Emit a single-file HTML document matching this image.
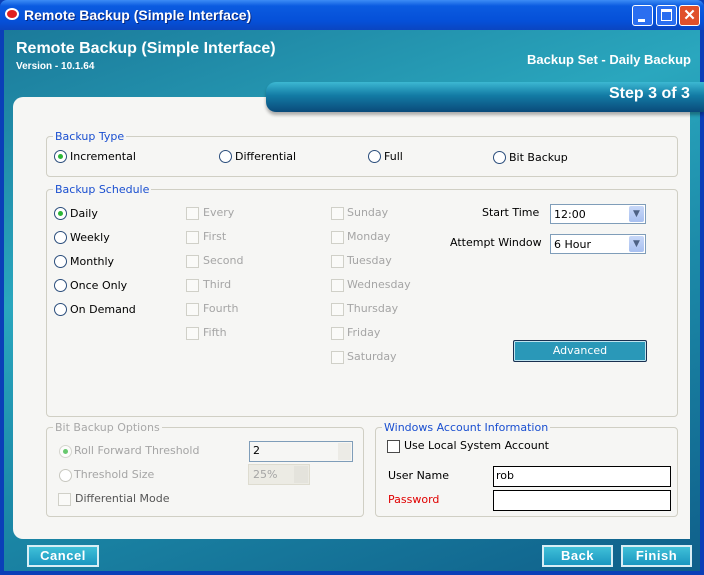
<!DOCTYPE html><html><head><style>
*{margin:0;padding:0;box-sizing:border-box}
body{width:704px;height:575px;position:relative;overflow:hidden;font-family:"DejaVu Sans","Liberation Sans",sans-serif;font-size:11px;background:#0a3fb8}
.a{position:absolute;white-space:nowrap}
.title{left:0;top:0;width:704px;height:30px;background:linear-gradient(#3d8cf5,#0b5be0 20%,#0550d8 70%,#0a45c0);border-radius:7px 7px 0 0}
.main{left:4px;top:30px;width:696px;height:541px;background:linear-gradient(160deg,#1b7a9a 0%,#2aa7be 35%,#1c8aa8 60%,#0f5f8a 100%)}
.panel{left:13px;top:97px;width:677px;height:442px;background:#f6f6f4;border-radius:10px 0 0 10px}
.step{left:266px;top:82px;width:438px;height:30px;background:linear-gradient(#3cb8d2,#137ba4 45%,#0a4a7a);border-radius:10px 0 0 10px;box-shadow:0 3px 3px rgba(0,0,0,.3)}
fieldset{position:absolute;border:1px solid #d0cfc4;border-radius:4px}
legend{margin-left:6px;padding:0 2px;color:#1a4fd0;font-size:11px}
.dis legend{color:#a8a8a8}
.r{width:13px;height:13px;border:1px solid #2b4e7c;border-radius:50%;background:#fff;display:inline-block;position:absolute}
.r.on::after{content:"";position:absolute;left:3px;top:3px;width:5px;height:5px;border-radius:50%;background:#2bb536}
.c{width:13px;height:13px;border:1px solid #d0d0c8;background:#fafaf8;position:absolute}
.g{color:#a5a5a5}
.sel{border:1px solid #7f9db9;background:#fff;height:20px}
.arr{position:absolute;right:1px;top:1px;width:15px;height:16px;background:linear-gradient(#c8d8f8,#a8c0f0);border-radius:2px;color:#4d6185;font-size:9px;text-align:center;line-height:16px}
.btn{background:linear-gradient(#40c0d8,#1a96c0);border:2px solid #d8eef5;color:#fff;font-weight:bold;font-family:"Liberation Sans",sans-serif;font-size:13px;text-align:center;line-height:18px;height:22px;letter-spacing:.5px}
</style></head><body>
<div class="a title"></div>
<div class="a" style="left:5px;top:8px;width:14px;height:12px;border-radius:50%;background:#e02020;border:2px solid #fff"></div>
<div class="a" style="left:24px;top:7px;color:#fff;font-family:'Liberation Sans',sans-serif;font-size:14px;font-weight:bold;text-shadow:1px 1px #0a2a80">Remote Backup (Simple Interface)</div>
<div class="a" style="left:632px;top:5px;width:21px;height:21px;background:#2a6ef0;border:1px solid #fff;border-radius:3px"><div style="position:absolute;left:5px;top:13px;width:7px;height:3px;background:#fff"></div></div>
<div class="a" style="left:656px;top:5px;width:21px;height:21px;background:#2a6ef0;border:1px solid #fff;border-radius:3px"><div style="position:absolute;left:4px;top:3px;width:11px;height:12px;border:1px solid #fff;border-top-width:3px"></div></div>
<div class="a" style="left:679px;top:5px;width:21px;height:21px;background:#e0502a;border:1px solid #fff;border-radius:3px;color:#fff;font-weight:bold;font-size:15px;text-align:center;line-height:19px;font-family:'Liberation Sans',sans-serif">✕</div>
<div class="a main"></div>
<div class="a" style="left:16px;top:40px;color:#fff;font-family:'Liberation Sans',sans-serif;font-size:16px;font-weight:bold">Remote Backup (Simple Interface)</div>
<div class="a" style="left:16px;top:61px;color:#fff;font-family:'Liberation Sans',sans-serif;font-size:10px;font-weight:bold">Version - 10.1.64</div>
<div class="a" style="left:527px;top:52px;color:#fff;font-family:'Liberation Sans',sans-serif;font-size:13px;font-weight:bold">Backup Set - Daily Backup</div>
<div class="a panel"></div>
<div class="a step"></div>
<div class="a" style="left:609px;top:85px;color:#fff;font-family:'Liberation Sans',sans-serif;font-size:16px;font-weight:bold">Step 3 of 3</div>

<fieldset style="left:46px;top:130px;width:632px;height:47px"><legend>Backup Type</legend></fieldset>
<span class="r on" style="left:54px;top:150px"></span><span class="a" style="left:70px;top:150px">Incremental</span>
<span class="r" style="left:219px;top:150px"></span><span class="a" style="left:235px;top:150px">Differential</span>
<span class="r" style="left:368px;top:150px"></span><span class="a" style="left:384px;top:150px">Full</span>
<span class="r" style="left:493px;top:151px"></span><span class="a" style="left:509px;top:151px">Bit Backup</span>

<fieldset style="left:46px;top:183px;width:632px;height:234px"><legend>Backup Schedule</legend></fieldset>
<span class="r on" style="left:54px;top:207px"></span><span class="a" style="left:70px;top:207px">Daily</span>
<span class="r" style="left:54px;top:231px"></span><span class="a" style="left:70px;top:231px">Weekly</span>
<span class="r" style="left:54px;top:255px"></span><span class="a" style="left:70px;top:255px">Monthly</span>
<span class="r" style="left:54px;top:279px"></span><span class="a" style="left:70px;top:279px">Once Only</span>
<span class="r" style="left:54px;top:303px"></span><span class="a" style="left:70px;top:303px">On Demand</span>
<span class="c" style="left:186px;top:207px"></span><span class="a g" style="left:203px;top:206px">Every</span>
<span class="c" style="left:186px;top:231px"></span><span class="a g" style="left:203px;top:230px">First</span>
<span class="c" style="left:186px;top:255px"></span><span class="a g" style="left:203px;top:254px">Second</span>
<span class="c" style="left:186px;top:279px"></span><span class="a g" style="left:203px;top:278px">Third</span>
<span class="c" style="left:186px;top:303px"></span><span class="a g" style="left:203px;top:302px">Fourth</span>
<span class="c" style="left:186px;top:327px"></span><span class="a g" style="left:203px;top:326px">Fifth</span>
<span class="c" style="left:331px;top:207px"></span><span class="a g" style="left:347px;top:206px">Sunday</span>
<span class="c" style="left:331px;top:231px"></span><span class="a g" style="left:347px;top:230px">Monday</span>
<span class="c" style="left:331px;top:255px"></span><span class="a g" style="left:347px;top:254px">Tuesday</span>
<span class="c" style="left:331px;top:279px"></span><span class="a g" style="left:347px;top:278px">Wednesday</span>
<span class="c" style="left:331px;top:303px"></span><span class="a g" style="left:347px;top:302px">Thursday</span>
<span class="c" style="left:331px;top:327px"></span><span class="a g" style="left:347px;top:326px">Friday</span>
<span class="c" style="left:331px;top:351px"></span><span class="a g" style="left:347px;top:350px">Saturday</span>
<span class="a" style="left:482px;top:206px">Start Time</span>
<div class="a sel" style="left:550px;top:204px;width:96px"><span style="position:absolute;left:3px;top:3px">12:00</span><div class="arr">▼</div></div>
<span class="a" style="left:450px;top:236px">Attempt Window</span>
<div class="a sel" style="left:550px;top:234px;width:96px"><span style="position:absolute;left:3px;top:3px">6 Hour</span><div class="arr">▼</div></div>
<div class="a" style="left:513px;top:340px;width:134px;height:22px;border:1px solid #1a3050;border-radius:2px;background:#2a98b8;box-shadow:inset 0 0 0 1px #bfe4ef;color:#fff;text-align:center;line-height:19px">Advanced</div>

<fieldset class="dis" style="left:46px;top:421px;width:318px;height:96px"><legend>Bit Backup Options</legend></fieldset>
<span class="r on" style="left:59px;top:445px;border-color:#c8c8c0;opacity:.7"></span><span class="a g" style="left:74px;top:444px">Roll Forward Threshold</span>
<div class="a" style="left:249px;top:441px;width:104px;height:21px;border:1px solid #7f9db9;background:#f6f6f4"><span style="position:absolute;left:3px;top:2px">2</span><div style="position:absolute;right:1px;top:1px;width:13px;height:17px;background:#ecebe6"></div></div>
<span class="r" style="left:59px;top:469px;border-color:#c8c8c0"></span><span class="a g" style="left:74px;top:468px">Threshold Size</span>
<div class="a" style="left:248px;top:464px;width:62px;height:21px;background:#ecebe4;border:1px solid #dedcd0"><span class="g" style="position:absolute;left:4px;top:3px">25%</span><div style="position:absolute;right:1px;top:1px;width:14px;height:17px;background:#e4e3dc"></div></div>
<span class="c" style="left:58px;top:493px"></span><span class="a" style="left:75px;top:492px;color:#555">Differential Mode</span>

<fieldset style="left:375px;top:421px;width:303px;height:96px"><legend>Windows Account Information</legend></fieldset>
<span class="c" style="left:387px;top:440px;border-color:#4a4a4a;background:#fff"></span><span class="a" style="left:404px;top:439px">Use Local System Account</span>
<span class="a" style="left:388px;top:469px">User Name</span>
<div class="a" style="left:493px;top:466px;width:178px;height:21px;border:1px solid #000;background:#fff"><span style="position:absolute;left:2px;top:2px">rob</span></div>
<span class="a" style="left:388px;top:493px;color:#e00000">Password</span>
<div class="a" style="left:493px;top:490px;width:178px;height:21px;border:1px solid #000;background:#fff"></div>

<div class="a btn" style="left:27px;top:545px;width:72px">Cancel</div>
<div class="a btn" style="left:542px;top:545px;width:71px">Back</div>
<div class="a btn" style="left:621px;top:545px;width:71px">Finish</div>
</body></html>
